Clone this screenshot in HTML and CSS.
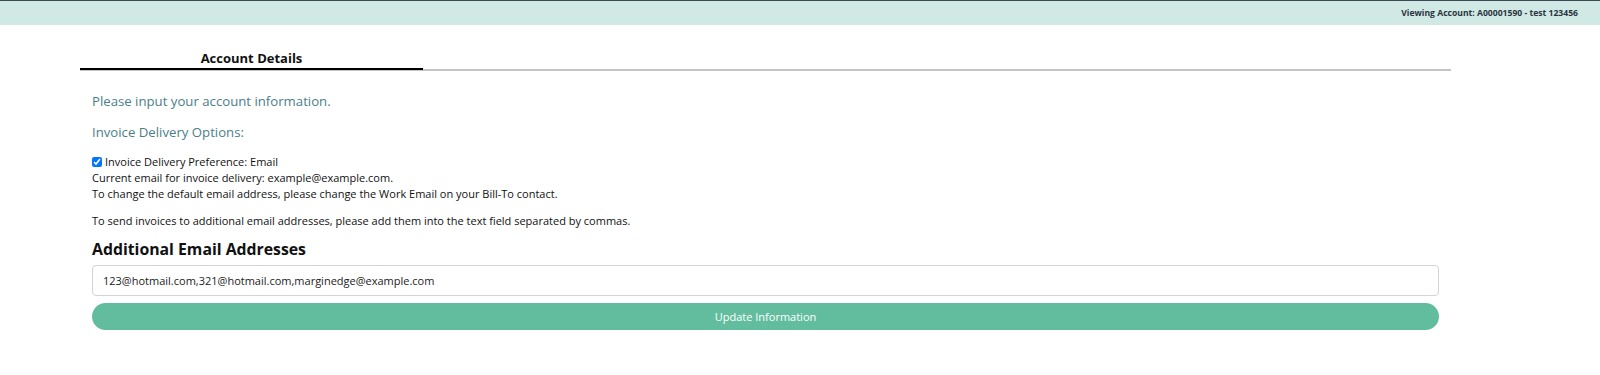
FILE: index.html
```html
<!DOCTYPE html>
<html lang="en">
<head>
  <meta charset="UTF-8" />
  <meta name="viewport" content="width=device-width, initial-scale=1.0"/>
  <title>Account Details</title>
  <link rel="stylesheet" href="styles.css">
</head>
<body>
  <div class="topbar">
    <span class="viewing">Viewing Account: A00001590 - test 123456</span>
  </div>

  <div class="page">
    <div class="tabs">
      <div class="tab active">Account Details</div>
    </div>

    <div class="content">
      <p class="lead">Please input your account information.</p>
      <p class="lead">Invoice Delivery Options:</p>

      <div class="pref">
        <label class="check-row">
          <input type="checkbox" checked />
          <span>Invoice Delivery Preference: Email</span>
        </label>
        <div>Current email for invoice delivery: example@example.com.</div>
        <div>To change the default email address, please change the Work Email on your Bill-To contact.</div>
      </div>

      <p class="note">To send invoices to additional email addresses, please add them into the text field separated by commas.</p>

      <h2>Additional Email Addresses</h2>
      <input class="emails" type="text" value="123@hotmail.com,321@hotmail.com,marginedge@example.com" />
      <button class="update">Update Information</button>
    </div>
  </div>
</body>
</html>
```

FILE: styles.css
```css
html, body {
  margin: 0;
  padding: 0;
  background: white;
  font-family: "Open Sans", "Noto Sans", sans-serif;
  color: #111;
}

.topbar {
  height: 24px;
  background: #d0e9e5;
  border-top: 1px solid #3b4a55;
  display: flex;
  align-items: center;
  justify-content: flex-end;
  padding-right: 22px;
}

.viewing {
  font-size: 8.6px;
  font-weight: 700;
  color: #2b3440;
}

.page {
  margin-left: 80px;
  width: 1371px;
}

.tabs {
  margin-top: 24px;
  border-bottom: 2px solid #c4c4c4;
  display: flex;
}

.tab {
  width: 343px;
  text-align: center;
  font-size: 13px;
  font-weight: 700;
  padding-bottom: 1px;
  line-height: 18px;
}

.tab.active {
  border-bottom: 2px solid #000;
  margin-bottom: -1px;
}

.content {
  padding: 0 12px;
}

.lead {
  font-size: 13.2px;
  color: #4c7e8a;
  margin: 0;
  line-height: 19px;
}

.lead:first-child {
  margin-top: 21px;
}

.lead + .lead {
  margin-top: 12px;
}

.pref {
  margin-top: 12px;
  font-size: 11px;
  line-height: 15.8px;
  color: #111;
}

.check-row {
  display: flex;
  align-items: center;
}

.check-row input {
  margin: 0 3px 0 0;
  width: 10px;
  height: 10px;
}

.note {
  font-size: 11px;
  line-height: 15px;
  margin: 12px 0 0;
}

h2 {
  font-size: 15.8px;
  font-weight: 700;
  margin: 10px 0 5px;
  line-height: 22px;
}

.emails {
  display: block;
  box-sizing: border-box;
  width: 100%;
  height: 31px;
  padding: 0 10px;
  border: 1px solid #d4d4d4;
  border-radius: 4px;
  font-family: inherit;
  font-size: 11px;
  color: #222;
}

.update {
  display: block;
  width: 100%;
  height: 27px;
  margin-top: 7px;
  border: none;
  border-radius: 14px;
  background: #62bd9f;
  color: white;
  font-family: inherit;
  font-size: 11px;
  font-weight: 500;
}
```
